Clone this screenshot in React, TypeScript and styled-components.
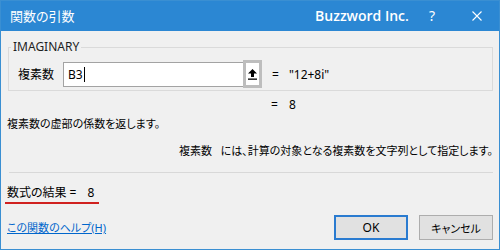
import React from "react";
import styled, { createGlobalStyle } from "styled-components";

const GlobalStyle = createGlobalStyle`
  html, body {
    margin: 0;
    padding: 0;
    background: #f0f0f0;
  }
  body {
    font-family: "Noto Sans", "Noto Sans CJK JP", sans-serif;
    font-size: 12px;
    color: #000;
    font-feature-settings: "palt";
  }
`;

const Window = styled.div`
  width: 500px;
  height: 250px;
  box-sizing: border-box;
  border: 1px solid #3a8fd2;
  background: #f0f0f0;
  display: flex;
  flex-direction: column;
`;

const TitleBar = styled.div`
  height: 30px;
  background: #2b87d3;
  color: #fff;
  display: flex;
  align-items: center;
  padding-left: 9px;
  padding-right: 17px;
  flex-shrink: 0;
`;

const Title = styled.div`
  flex: 1;
  font-size: 13px;
  line-height: 16px;
`;

const Brand = styled.div`
  font-family: "Open Sans", "Noto Sans", sans-serif;
  font-size: 14px;
  font-weight: 600;
  line-height: 18px;
`;

const Help = styled.div`
  margin-left: 20px;
  font-family: "Noto Sans", sans-serif;
  font-size: 14px;
  line-height: 18px;
`;

const Close = styled.svg`
  margin-left: 37px;
  width: 10px;
  height: 10px;
`;

const Body = styled.div`
  flex: 1;
  display: flex;
  flex-direction: column;
  padding: 0 6px 0 6px;
`;

const GroupBox = styled.fieldset`
  margin: 9px 0 0 1px;
  padding: 0 0 2px 0;
  border: 1px solid #dadada;
  min-width: 0;
`;

const Legend = styled.legend`
  margin-left: 2px;
  padding: 0 2px;
  font-size: 12px;
  line-height: 14px;
  color: #1e1e1e;
`;

const ArgRow = styled.div`
  display: flex;
  align-items: flex-start;
  height: 28px;
  margin-top: 6px;
`;

const ArgLabel = styled.div`
  width: 45px;
  margin-left: 9px;
  margin-top: 2px;
  line-height: 25px;
`;

const Field = styled.div`
  width: 180px;
  height: 25px;
  box-sizing: border-box;
  margin-top: 2px;
  border: 1px solid #a3a3a3;
  border-right: none;
  background: #fff;
  padding-left: 4px;
  line-height: 23px;
  display: flex;
  align-items: center;
`;

const Caret = styled.span`
  display: inline-block;
  width: 1px;
  height: 15px;
  background: #000;
  margin-left: 1px;
`;

const RefButton = styled.div`
  width: 19px;
  height: 28px;
  box-sizing: border-box;
  border: 3px solid #bdbdbd;
  background: #fff;
  display: flex;
  align-items: center;
  justify-content: center;
`;

const ArgValue = styled.div`
  margin-top: 2px;
  margin-left: 10px;
  line-height: 25px;
  display: flex;
  gap: 10px;
`;

const ResultLine = styled.div`
  margin-top: 6px;
  margin-left: 264px;
  line-height: 16px;
  display: flex;
  gap: 11px;
`;

const Description = styled.div<{ $top: number; $align?: string }>`
  margin-top: ${(p) => p.$top}px;
  font-size: 11px;
  line-height: 16px;
  text-align: ${(p) => p.$align || "left"};
  white-space: pre;
`;

const Separator = styled.div`
  margin: 13px 0 0 2px;
  height: 1px;
  background: #d8d8d8;
`;

const FormulaResult = styled.div`
  margin-top: 12px;
  margin-left: -2px;
  align-self: flex-start;
  padding: 0 5px 1px 2px;
  border-bottom: 2px solid #d0211f;
  line-height: 16px;
  display: flex;
  gap: 3px;
`;

const Footer = styled.div`
  margin-top: 11px;
  display: flex;
  align-items: center;
  gap: 11px;
`;

const HelpLink = styled.a`
  flex: 1;
  color: #0066cc;
  text-decoration: underline;
  font-size: 11px;
  line-height: 16px;
  margin-top: 1px;
`;

const Button = styled.button<{ $default?: boolean }>`
  width: 74px;
  height: 25px;
  box-sizing: border-box;
  background: #e1e1e1;
  border: ${(p) => (p.$default ? "2px solid #2a7bd0" : "1px solid #adadad")};
  font-family: inherit;
  font-size: ${(p) => (p.$default ? "12px" : "11px")};
  font-feature-settings: "palt";
  color: #000;
  padding: 0;
`;

export default function App() {
  return (
    <>
      <GlobalStyle />
      <Window>
        <TitleBar>
          <Title>関数の引数</Title>
          <Brand>Buzzword Inc.</Brand>
          <Help>?</Help>
          <Close viewBox="0 0 10 10">
            <path d="M0.5 0.5 L9.5 9.5 M9.5 0.5 L0.5 9.5" stroke="#fff" strokeWidth="1.1" />
          </Close>
        </TitleBar>
        <Body>
          <GroupBox>
            <Legend>IMAGINARY</Legend>
            <ArgRow>
              <ArgLabel>複素数</ArgLabel>
              <Field>
                B3
                <Caret />
              </Field>
              <RefButton>
                <svg width="9" height="11" viewBox="0 0 9 11">
                  <path d="M4.5 0 L9 4.5 L6 4.5 L6 8 L3 8 L3 4.5 L0 4.5 Z" fill="#000" />
                  <rect x="0" y="9.5" width="9" height="1.3" fill="#000" />
                </svg>
              </RefButton>
              <ArgValue>
                <span>=</span>
                <span>"12+8i"</span>
              </ArgValue>
            </ArgRow>
          </GroupBox>
          <ResultLine>
            <span>=</span>
            <span>8</span>
          </ResultLine>
          <Description $top={3}>複素数の虚部の係数を返します。</Description>
          <Description $top={11} $align="right">
            {"複素数   には、計算の対象となる複素数を文字列として指定します。"}
          </Description>
          <Separator />
          <FormulaResult>
            <span>数式の結果</span>
            <span>=</span>
            <span style={{ marginLeft: 8 }}>8</span>
          </FormulaResult>
          <Footer>
            <HelpLink href="#">この関数のヘルプ(H)</HelpLink>
            <Button $default>OK</Button>
            <Button>キャンセル</Button>
          </Footer>
        </Body>
      </Window>
    </>
  );
}
